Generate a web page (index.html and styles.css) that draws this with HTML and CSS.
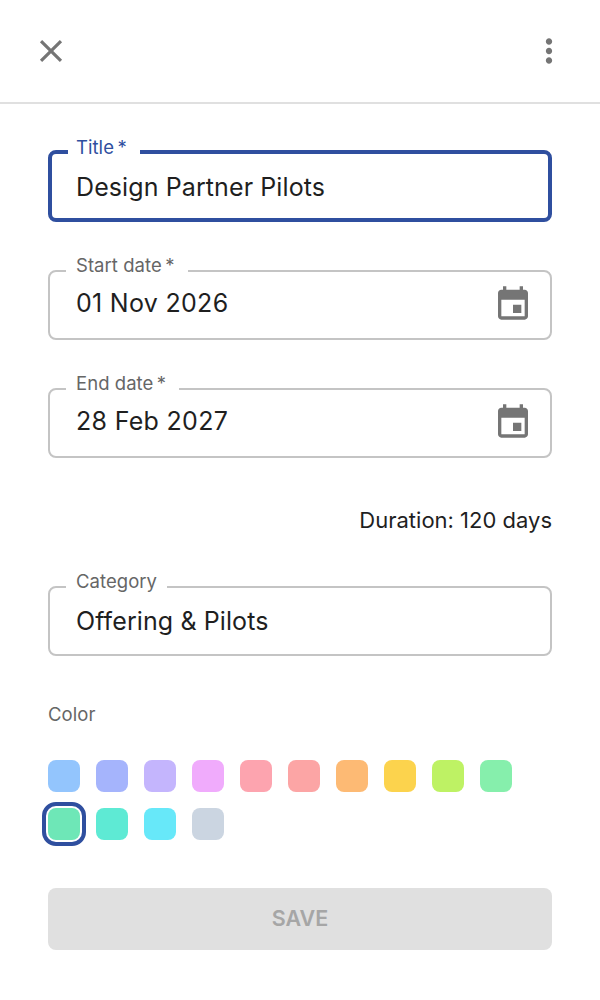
FILE: index.html
```html
<!DOCTYPE html>
<html lang="en">
<head>
<meta charset="utf-8">
<title>Edit item</title>
<link rel="stylesheet" href="styles.css">
</head>
<body>
<header class="topbar">
  <button class="icon-btn" aria-label="Close">
    <svg class="icon" viewBox="0 0 24 24" width="38" height="38"><path d="M19 6.41 17.59 5 12 10.59 6.41 5 5 6.41 10.59 12 5 17.59 6.41 19 12 13.41 17.59 19 19 17.59 13.41 12z"/></svg>
  </button>
  <button class="icon-btn" aria-label="More">
    <svg class="icon" viewBox="0 0 24 24" width="38" height="38"><path d="M12 8c1.1 0 2-.9 2-2s-.9-2-2-2-2 .9-2 2 .9 2 2 2m0 2c-1.1 0-2 .9-2 2s.9 2 2 2 2-.9 2-2-.9-2-2-2m0 6c-1.1 0-2 .9-2 2s.9 2 2 2 2-.9 2-2-.9-2-2-2"/></svg>
  </button>
</header>
<main class="form">
  <div class="field field-focused">
    <span class="label">Title<span class="req">&#8201;*</span></span>
    <span class="value">Design Partner Pilots</span>
  </div>
  <div class="field field-date">
    <span class="label">Start date<span class="req">&#8201;*</span></span>
    <span class="value">01 Nov 2026</span>
    <svg class="icon" viewBox="0 0 24 24" width="40" height="40"><path d="M19 4h-1V2h-2v2H8V2H6v2H5c-1.11 0-1.99.9-1.99 2L3 20c0 1.1.89 2 2 2h14c1.1 0 2-.9 2-2V6c0-1.1-.9-2-2-2m0 16H5V10h14zm-2-7h-5v5h5z"/></svg>
  </div>
  <div class="field field-date">
    <span class="label">End date<span class="req">&#8201;*</span></span>
    <span class="value">28 Feb 2027</span>
    <svg class="icon" viewBox="0 0 24 24" width="40" height="40"><path d="M19 4h-1V2h-2v2H8V2H6v2H5c-1.11 0-1.99.9-1.99 2L3 20c0 1.1.89 2 2 2h14c1.1 0 2-.9 2-2V6c0-1.1-.9-2-2-2m0 16H5V10h14zm-2-7h-5v5h5z"/></svg>
  </div>
  <p class="duration">Duration: 120 days</p>
  <div class="field field-last">
    <span class="label">Category</span>
    <span class="value">Offering &amp; Pilots</span>
  </div>
  <p class="color-title">Color</p>
  <div class="swatches">
    <span class="swatch c1"></span><span class="swatch c2"></span><span class="swatch c3"></span><span class="swatch c4"></span><span class="swatch c5"></span><span class="swatch c6"></span><span class="swatch c7"></span><span class="swatch c8"></span><span class="swatch c9"></span><span class="swatch c10"></span><span class="swatch c11 selected"></span><span class="swatch c12"></span><span class="swatch c13"></span><span class="swatch c14"></span>
  </div>
  <button class="save" disabled>SAVE</button>
</main>
</body>
</html>
```
FILE: styles.css
```css
* { box-sizing: border-box; }
html, body { margin: 0; padding: 0; background: #fff; }
body { font-family: Inter, "Liberation Sans", sans-serif; color: #1f1f1f; width: 600px; height: 1000px; overflow: hidden; }
.topbar { height: 104px; display: flex; align-items: center; justify-content: space-between; padding: 0 32px; border-bottom: 2px solid #e0e0e0; }
.icon-btn { border: 0; background: none; padding: 0; display: flex; }
.icon { fill: #757575; display: block; }
.form { padding: 46px 48px 0; display: flex; flex-direction: column; }
.field { position: relative; height: 70px; border: 2px solid #c4c4c4; border-radius: 8px; display: flex; align-items: center; justify-content: space-between; padding: 0 17px 0 26px; margin-bottom: 48px; }
.field-focused { border: 4px solid #2f4f9f; height: 72px; padding: 1px 0 0 24px; }
.field-date { padding-bottom: 4px; }
.label { position: absolute; left: 16px; top: -19px; padding: 0 10px; background: #fff; font-size: 18.5px; line-height: 24px; letter-spacing: 0.05px; color: #666; }
.req { padding-right: 3px; }
.field-focused .label { color: #2f4f9f; top: -19px; padding: 0 10px 0 8px; }
.value { font-size: 25px; line-height: 32px; letter-spacing: 0.1px; color: #1f1f1f; }
.field-date .value { letter-spacing: 0.3px; }
.duration { margin: 0 0 52px; text-align: right; font-size: 22px; line-height: 28px; }
.field-last { margin-bottom: 0; }
.color-title { margin: 46px 0 34px; font-size: 18.5px; line-height: 24px; letter-spacing: 0.05px; color: #666; }
.swatches { display: grid; grid-template-columns: repeat(10, 32px); gap: 16px; margin-bottom: 48px; }
.swatch { width: 32px; height: 32px; border-radius: 8px; }
.selected { outline: 4px solid #2f4f9f; outline-offset: 2px; }
.c1 { background: #93c5fd; } .c2 { background: #a5b4fc; } .c3 { background: #c4b5fd; } .c4 { background: #f0abfc; } .c5 { background: #fda4af; } .c6 { background: #fca5a5; } .c7 { background: #fdba74; } .c8 { background: #fcd34d; } .c9 { background: #bef264; } .c10 { background: #86efac; } .c11 { background: #6ee7b7; } .c12 { background: #5eead4; } .c13 { background: #67e8f9; } .c14 { background: #cbd5e1; }
.save { height: 62px; border: 0; border-radius: 8px; background: #e0e0e0; color: #a6a6a6; font-family: inherit; font-size: 21.5px; font-weight: 600; padding-bottom: 4px; }
```
